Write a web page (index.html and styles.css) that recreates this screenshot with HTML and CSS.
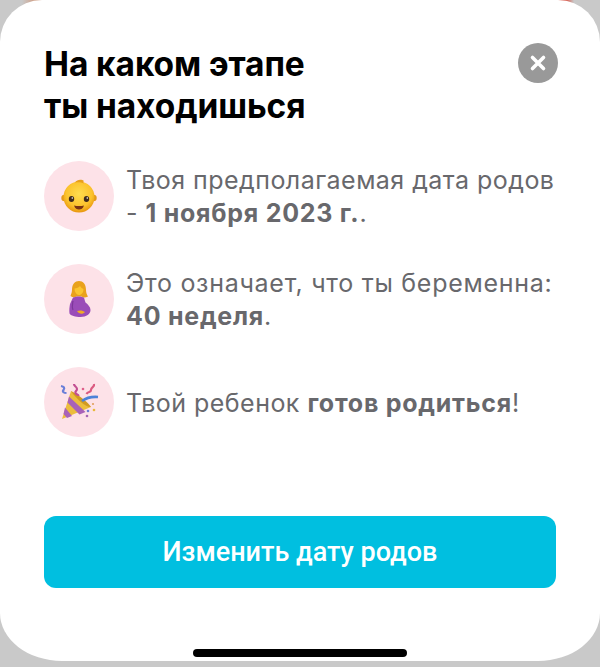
FILE: index.html
```html
<!DOCTYPE html>
<html lang="ru">
<head>
	<meta charset="UTF-8">
	<title>На каком этапе ты находишься</title>
	<link rel="stylesheet" href="styles.css">
</head>
<body>
	<div class="sheet">
		<div class="head">
			<h1 class="title">На каком этапе<br>ты находишься</h1>
			<div class="close">
				<svg width="18" height="18" viewBox="0 0 18 18">
					<path d="M3.5 3.5L14.5 14.5M14.5 3.5L3.5 14.5" stroke="#fff" stroke-width="3.6" stroke-linecap="round"/>
				</svg>
			</div>
		</div>
		<div class="rows">
			<div class="row">
				<div class="badge">
					<svg width="36" height="36" viewBox="0 0 36 36">
						<defs>
							<radialGradient id="skin" cx="50%" cy="40%" r="60%">
								<stop offset="0" stop-color="#ffdc4f"/>
								<stop offset="0.7" stop-color="#fbc22c"/>
								<stop offset="1" stop-color="#e8960f"/>
							</radialGradient>
						</defs>
						<circle cx="3.500" cy="20" r="3.200" fill="#e39a1a"/>
						<circle cx="32.500" cy="20" r="3.200" fill="#e39a1a"/>
						<circle cx="18" cy="19" r="15.500" fill="url(#skin)"/>
						<path d="M14 4.500c2-3.500 7-3.500 9-1.500-1 .5-1 1.500 0 2.500-3-1.500-6-1.500-9-1z" fill="#e8a01c"/>
						<ellipse cx="10.500" cy="21" rx="2.700" ry="3" fill="#3f2a1c"/>
						<ellipse cx="25.500" cy="21" rx="2.700" ry="3" fill="#3f2a1c"/>
						<circle cx="11.300" cy="20" r=".8" fill="#fff"/>
						<circle cx="26.300" cy="20" r=".8" fill="#fff"/>
						<path d="M13 27.500c3 .7 7 .7 10 0-1 3-3 4-5 4s-4-1-5-4z" fill="#7a3414"/>
					</svg>
				</div>
				<p class="text">Твоя предполагаемая дата родов<br>- <b>1 ноября 2023 г.</b>.</p>
			</div>
			<div class="row">
				<div class="badge">
					<svg width="24" height="36" viewBox="0 0 24 36">
						<path d="M5 9C5 3 8 0 12 0s7 3 7 9c0 3 1 5 2 6.500-3 1.500-5 1-6.500 0h-5c-2 1-4 1-6-.5C3.500 14 5 12 5 9z" fill="#e9a21c"/>
						<path d="M7.500 7.500c2 0 4.500-1 5.500-2.500 1 1.500 2 2.500 3.500 3 0 3.500-2 6-4.500 6s-4.500-3-4.500-6.500z" fill="#fbc52f"/>
						<path d="M6 16.500c3-1.500 8-1.500 11 0 .5 2 1 3.500 1.500 5 2.500 2 5 4.500 5 7.500 0 4-4 7-10 7-5 0-10-1.500-11-3.500C2 29 2.500 26 3 23c1-2 2-4.500 3-6.500z" fill="#9a4cb8"/>
						<path d="M6 20c-.5 3-1.500 6 0 9" fill="none" stroke="#7c379a" stroke-width="1.200"/>
						<path d="M10 30c3-1 6-.5 8 1-2 2.500-6 2.500-8-1z" fill="#efaa25"/>
					</svg>
				</div>
				<p class="text"><span class="wide">Это означает, что ты беременна:</span><br><b>40 неделя</b>.</p>
			</div>
			<div class="row">
				<div class="badge">
					<svg width="40" height="38" viewBox="0 0 40 38">
						<path d="M12 8L32 24 3 36z" fill="#ecbd3c"/>
						<path d="M10 13.500l16.500 15.500-6 2.500L8.500 19.500zM6 24.500l7 8.500-5 2-3.500-4z" fill="#a962b8"/>
						<path d="M32 24c-4 1-14-7-20-16 6 3 17 11 20 16z" fill="#d19a22"/>
						<path d="M2 3c3 .5 4 2 2.500 4s.5 3 3 3" fill="none" stroke="#6a7fd8" stroke-width="2.200"/>
						<path d="M15 1c0 2.500 3 2.500 3 5s-2.500 2-1.500 4 3 1 3 3" fill="none" stroke="#c24f92" stroke-width="2.200"/>
						<path d="M35 1c1 3-3 3-3 6s-3 1-4.500 4" fill="none" stroke="#db5a80" stroke-width="2.200"/>
						<path d="M23 18c4-3 10-4.500 16-4" fill="none" stroke="#4c82d8" stroke-width="2.600"/>
						<circle cx="24" cy="6" r="1.300" fill="#e0608a"/>
						<circle cx="29" cy="28" r="1.300" fill="#6b7fd6"/>
						<circle cx="28" cy="33" r="1.300" fill="#a766b5"/>
						<circle cx="35" cy="27" r="1.300" fill="#e8b93a"/>
						<circle cx="34" cy="21" r="1.100" fill="#e0a060"/>
					</svg>
				</div>
				<p class="text">Твой ребенок <b>готов родиться</b>!</p>
			</div>
		</div>
		<div class="action">Изменить дату родов</div>
		<div class="home-bar"></div>
	</div>
</body>
</html>
```

FILE: styles.css
```css
* {
	margin: 0;
	padding: 0;
	box-sizing: border-box;
}
html, body {
	height: 667px;
	overflow: hidden;
}
body {
	font-family: "Inter", "Liberation Sans", sans-serif;
	background: linear-gradient(90deg, #c9c9c9 22px, #cfa38c 34px, #cfa38c 300px, #d9584a 300px, #d9584a 566px, #c9c9c9 574px) top / 100% 8px no-repeat, #c9c9c9;
}
.sheet {
	height: 661px;
	background: #fff;
	border-radius: 42px 42px 62px 62px / 42px 42px 48px 48px;
	padding: 43px 44px 0;
	display: flex;
	flex-direction: column;
}
.head {
	display: flex;
	justify-content: space-between;
	align-items: flex-start;
	height: 118px;
}
.title {
	font-size: 33.5px;
	line-height: 42px;
	font-weight: 700;
	letter-spacing: -0.1px;
	color: #000;
}
.close {
	width: 40px;
	height: 40px;
	margin-right: -2px;
	border-radius: 50%;
	background: #999;
	display: flex;
	align-items: center;
	justify-content: center;
}
.rows {
	display: flex;
	flex-direction: column;
	gap: 33px;
}
.row {
	display: flex;
	align-items: center;
	gap: 12px;
}
.badge {
	width: 70px;
	height: 70px;
	flex: none;
	border-radius: 50%;
	background: #fde2e8;
	display: flex;
	align-items: center;
	justify-content: center;
}
.text {
	font-size: 25px;
	line-height: 33px;
	letter-spacing: .47px;
	color: #68686c;
	white-space: nowrap;
	padding-top: 2px;
}
.text b {
	font-weight: 700;
	letter-spacing: .75px;
}
.text .wide {
	letter-spacing: .72px;
}
.action {
	margin-top: 79px;
	height: 72px;
	border-radius: 12px;
	background: #00bfe0;
	color: #fff;
	font-family: "Roboto", "Liberation Sans", sans-serif;
	font-size: 27px;
	font-weight: 500;
	display: flex;
	align-items: center;
	justify-content: center;
}
.home-bar {
	width: 214px;
	height: 8px;
	margin: 61px auto 0;
	border-radius: 4px;
	background: #000;
}
```
